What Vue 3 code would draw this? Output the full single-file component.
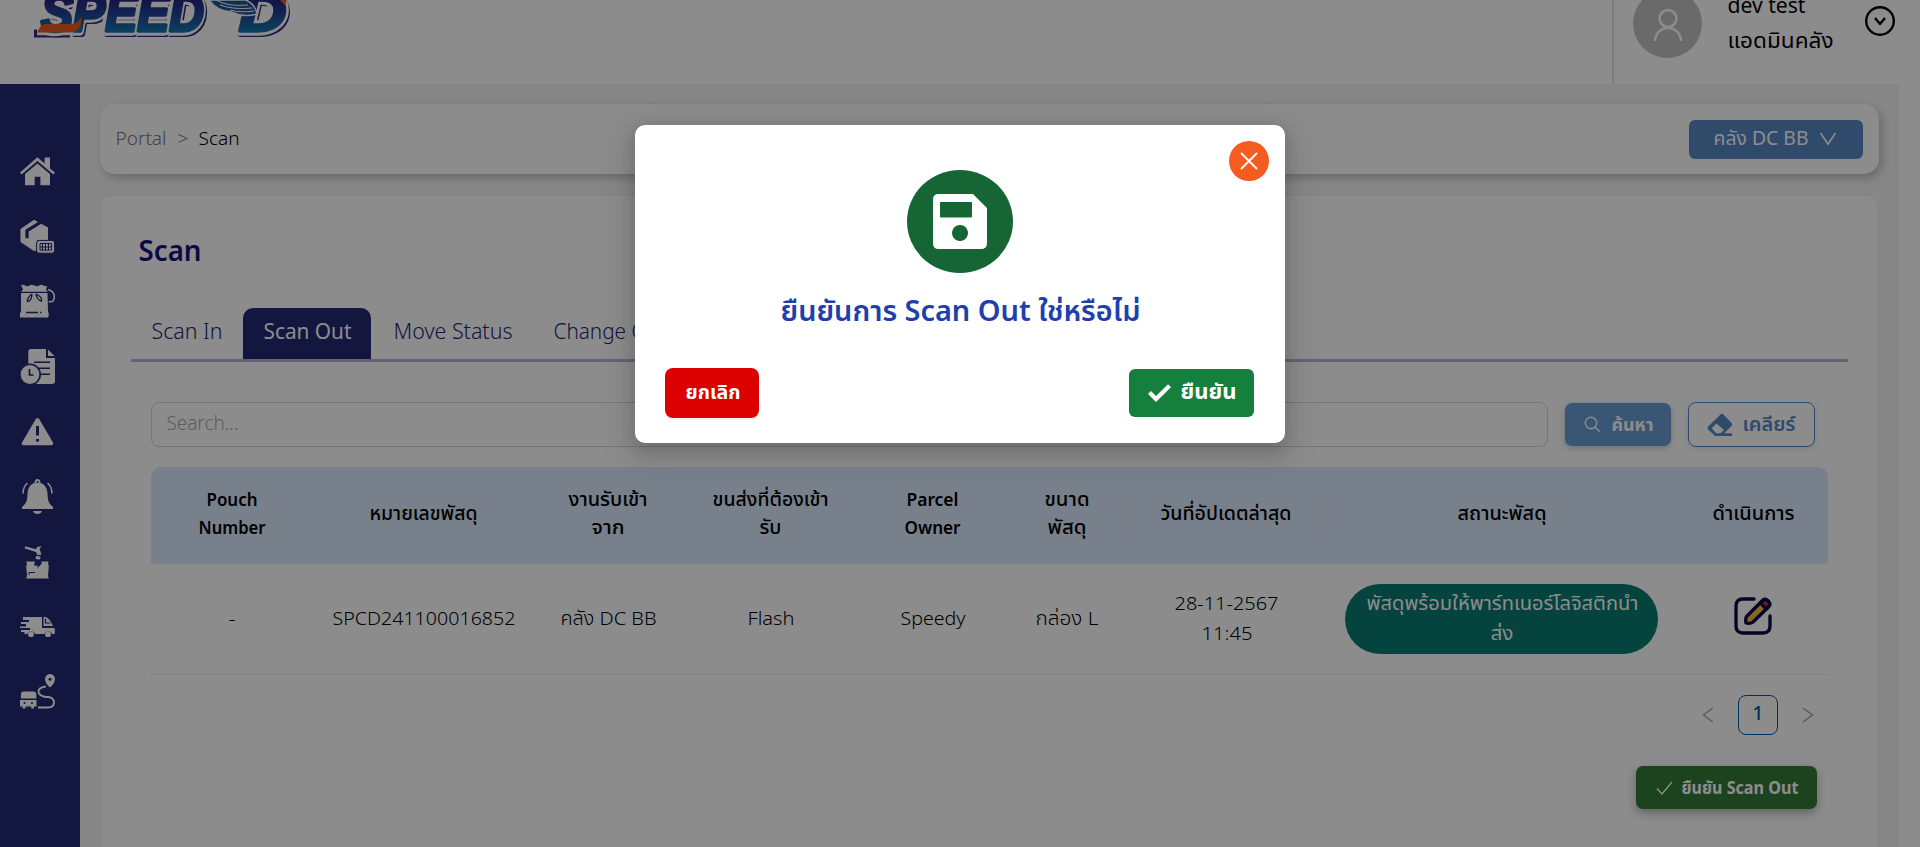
<script setup>
const vFit = {
  mounted(el, { value }) {
    const natural = el.getBoundingClientRect().width
    el.style.width = value + 'px'
    el.style.transform = `scaleX(${value / natural})`
  },
}

const columns = [
  { w: 161, lines: [['Pouch', 51], ['Number', 67]] },
  { w: 222, thai: true, lines: [['หมายเลขพัสดุ', 108]] },
  { w: 148, thai: true, lines: [['งานรับเข้า', 79], ['จาก', 33]] },
  { w: 176, thai: true, lines: [['ขนส่งที่ต้องเข้า', 116], ['รับ', 22]] },
  { w: 148, lines: [['Parcel', 52], ['Owner', 56]] },
  { w: 121, thai: true, lines: [['ขนาด', 45], ['พัสดุ', 39]] },
  { w: 198, thai: true, lines: [['วันที่อัปเดตล่าสุด', 131]] },
  { w: 353, thai: true, lines: [['สถานะพัสดุ', 89]] },
  { w: 150, thai: true, lines: [['ดำเนินการ', 82]] },
]
const cells = [
  [['-', 7]],
  [['SPCD241100016852', 183]],
  [['คลัง DC BB', 96]],
  [['Flash', 47]],
  [['Speedy', 65]],
  [['กล่อง L', 63]],
  [['28-11-2567', 104], ['11:45', 51]],
]
const tabs = [
  { t: 'Scan In', w: 71 },
  { t: 'Scan Out', w: 88, active: true },
  { t: 'Move Status', w: 119 },
  { t: 'Change Owner', w: 141 },
]
</script>

<template>
  <div class="page">
    <header class="top">
      <svg class="logo" width="270" height="44" viewBox="0 0 270 44">
        <defs>
          <linearGradient id="lg" gradientUnits="userSpaceOnUse" x1="0" y1="0" x2="0" y2="33">
            <stop offset="0" stop-color="#262580" />
            <stop offset=".5" stop-color="#1f4a98" />
            <stop offset="1" stop-color="#1478ad" />
          </linearGradient>
        </defs>
        <g font-family="Liberation Sans, sans-serif" font-weight="700" font-style="italic" font-size="54" stroke-linejoin="round">
          <g fill="#33297a" stroke="#33297a" stroke-width="8">
            <text x="10" y="33" textLength="163" lengthAdjust="spacingAndGlyphs">SPEED</text>
            <text x="208" y="33" textLength="47" lengthAdjust="spacingAndGlyphs">D</text>
            <path d="M2 33.500h36" />
          </g>
          <g fill="#fff" stroke="#fff" stroke-width="9.500">
            <text x="8" y="30.500" textLength="163" lengthAdjust="spacingAndGlyphs">SPEED</text>
            <text x="206" y="30.500" textLength="47" lengthAdjust="spacingAndGlyphs">D</text>
            <path d="M5 30.500h36" />
          </g>
          <g fill="url(#lg)" stroke="url(#lg)" stroke-width="3.500">
            <text x="9" y="30.500" textLength="163" lengthAdjust="spacingAndGlyphs">SPEED</text>
            <text x="207" y="30.500" textLength="47" lengthAdjust="spacingAndGlyphs">D</text>
          </g>
        </g>
        <path d="M5 32.500 8 27q2-3 7-3h24q7 0 10-7 2 15.500-12 15.500z" fill="#f15a24" />
        <path d="M248 0h7l-2 5z" fill="#f15a24" />
        <path d="M177 0q8 11 22 12 13 6 26 2-2-10-11-14z" fill="#20559c" stroke="#fff" stroke-width="1.500" />
        <path d="M184 0q12 7 32 5M188 5q14 5 32 3M198 10q10 3 24 1" fill="none" stroke="#fff" stroke-width="1" />
      </svg>
      <div class="user">
        <div class="avatar">
          <svg width="30" height="34" viewBox="0 0 30 34" fill="none" stroke="#fff" stroke-width="2.6">
            <circle cx="15" cy="10.5" r="8.5" /><path d="M2 33a13 13 0 0 1 26 0" />
          </svg>
        </div>
        <div class="who">
          <div><span v-fit="78" class="fit">dev test</span></div>
          <div><span v-fit="106" class="fit">แอดมินคลัง</span></div>
        </div>
        <svg class="drop" width="32" height="32" viewBox="0 0 32 32" fill="none" stroke="#000" stroke-width="2.4">
          <circle cx="16" cy="16" r="13.8" /><path d="M11 13l5 6 5-6" />
        </svg>
      </div>
    </header>

    <div class="body">
      <nav class="side">
        <svg viewBox="0 0 35 35"><path d="M0 18.6 17.4 3.3l7.2 6.3V3.4H30v11l5 4.2-1.6 2-16-13.6-15.8 13.6z" /><path d="M5 20 17.4 9.6 30 20v11.3h-9.6v-8.6h-5.7v8.6H5z" /></svg>
        <svg viewBox="0 0 35 35">
          <path d="M.5 10 14 .8 28 8.4V21H17v10.6L14 32 .5 23z" /><path d="M20.5 3.4 7 11.7v7.6" class="cut" stroke-width="3.2" />
          <rect x="16.6" y="21.4" width="18" height="12.8" rx="2.6" stroke="#242874" /><path d="M20 24.5h11.5v6.6H20zM22.5 25v6M25.5 25v6M28.5 25v6M20 28h12" class="cut" stroke-width="1" />
        </svg>
        <svg viewBox="0 0 35 35">
          <path d="M1 1.5q2-1.5 4 0 2.500 1.500 4.500 0t5 0 4.500 0 4.500 0 4 0L26 5l1.500 2.700h-26L3 5zM1 9h26.500l.5 18q1.500 4 0 6.500h-28q-.7-3 1-6.500z" />
          <path d="M12 10q-5 4-4.500 7.500 4 0 4.500-7.500M16 10q1 6 5.500 7 1-4-5.500-7M6 28.500h12M20 28.500h1.500" class="cut" stroke-width="1.300" />
          <path d="M28 5.500q7 2 6.300 8.500-1 5-5.500 3.500" fill="none" stroke="#fff" stroke-width="1.500" />
        </svg>
        <svg viewBox="0 0 35 35">
          <path d="M11 0h15v9h9v23q0 3-3 3H11q-2.700 0-2.700-3V3Q8.300 0 11 0zM28 .5l6.500 6.500H28z" />
          <path d="M14 13.300h16M18 19.300h12M20 25.300h10" class="cut" stroke-width="1.600" />
          <circle cx="10" cy="25.500" r="10.200" stroke="#242874" stroke-width="1.600" /><path d="M9.500 20v6h4" class="cut" stroke-width="1.700" />
        </svg>
        <svg viewBox="0 0 35 35"><path d="M15.800 5q1.700-2 3.400 0L33 28.500q.8 2.500-1.500 2.800h-28Q1 31 2 28.500z" /><path d="M17.500 12v9.500M17.500 25v2.600" class="cut" stroke-width="3" /></svg>
        <svg viewBox="0 0 35 35">
          <path d="M17.500 0a3 3 0 0 1 2.800 3.800Q27 6 27.500 14q0 8 2.500 11l3 3v2H2v-2l3-3q2.500-3 2.500-11Q8 6 14.700 3.800A3 3 0 0 1 17.500 0zM13 32h9q-1 3-4.500 3T13 32z" /><circle cx="17.500" cy="3" r="1" fill="#242874" />
          <path d="M7.500 4Q3 8 3 14.500M27.500 4q4.500 4 4.500 10.500" fill="none" stroke="#fff" stroke-width="1.600" />
        </svg>
        <svg viewBox="0 0 35 35">
          <path d="M5 2.200 16 5.300l1-2L21.500 2 19.500 5l2 5.500-4 .8-1.500-3.200L4.800 4.600zM16 12l4.500.5-.5 3-4.500-.5zM6 17.500h9l-1 4 4 .3-1 3 5-5.500-1-1.800h7.600l-.6 2 .8 2.500-.8 10 .8 2.500H6l1-2.500-.8-9.500.8-2.500z" />
          <path d="M9 31v-2.500h6" class="cut" stroke-width="1" />
        </svg>
        <svg viewBox="0 0 35 35">
          <path d="M3 8h19v11h12.500q.8 3 0 6H32a4 4 0 0 0-7.600 0H15a4 4 0 0 0-7.600 0H4.500v-2H1v-2h9v-2H0v-1.600h6V15H1v-2h8v-2H3z" /><path d="M23.500 8H26q4 2 7 9h-9.500z" /><path d="M25.500 9.500v4.500h5" class="cut" stroke-width="1.200" />
          <circle cx="11" cy="25.200" r="2.900" /><circle cx="28" cy="25.200" r="2.900" />
        </svg>
        <svg viewBox="0 0 35 35">
          <path d="M1 20q0-2.500 2.500-2.500H14q2.300 0 2.300 2.500v4.500H.8zM0 26h16.500v6.600H14v2h-2.700v-2H5.500v2H2.500v-2H0zM30 0q5 .5 5 5.500-.5 4-5 8-4.500-4-5-8Q25 .5 30 0z" />
          <circle cx="30" cy="5.300" r="1.500" fill="#242874" /><circle cx="4.500" cy="29" r="1" fill="#242874" /><circle cx="12" cy="29" r="1" fill="#242874" />
          <path d="M26 12.500q-7.500 1-7.500 5t7 5.500h3q5.500 1 5.500 5.500 0 5-6 5H18" fill="none" stroke="#fff" stroke-width="1.900" />
        </svg>
      </nav>

      <main class="content">
        <section class="crumbs">
          <div class="trail">
            <span v-fit="51" class="fit muted">Portal</span>
            <span v-fit="11" class="fit gt">&gt;</span>
            <span v-fit="41" class="fit">Scan</span>
          </div>
          <button class="depot">
            <span v-fit="95" class="fit">คลัง DC BB</span>
            <svg width="18" height="14" viewBox="0 0 18 14" fill="none" stroke="#fff" stroke-width="1.600"><path d="M1.500 1 9 12l7.500-11" /></svg>
          </button>
        </section>

        <section class="card">
          <h1><span v-fit="63" class="fit">Scan</span></h1>
          <div class="tabs">
            <div v-for="t in tabs" :key="t.t" class="tab" :class="{ active: t.active }"><span v-fit="t.w" class="fit">{{ t.t }}</span></div>
          </div>
          <div class="search">
            <div class="field"><span v-fit="72" class="fit">Search...</span></div>
            <button class="find">
              <svg width="17" height="17" viewBox="0 0 17 17" fill="none" stroke="#fff" stroke-width="1.400"><circle cx="7" cy="7" r="5.700" /><path d="M11 11l5 5" /></svg>
              <span v-fit="42" class="fit">ค้นหา</span>
            </button>
            <button class="clear">
              <svg width="26" height="24" viewBox="0 0 26 24"><path d="M13.500 1.500q1.500-1.500 3 0l8 8.500q1.300 1.500 0 3l-7.300 7.300H25V23H8.200L1.400 16.800q-1.800-1.800 0-3.500zM9.500 10.500 4.600 15.200l4.700 5h4.200l3.500-3.300z" fill="#5788c4" fill-rule="evenodd" /></svg>
              <span v-fit="53" class="fit">เคลียร์</span>
            </button>
          </div>

          <div class="row head">
            <div v-for="(c, i) in columns" :key="i" class="cell" :class="{ thai: c.thai }" :style="{ width: c.w + 'px' }">
              <div v-for="l in c.lines" :key="l[0]"><span v-fit="l[1]" class="fit">{{ l[0] }}</span></div>
            </div>
          </div>
          <div class="row data">
            <div v-for="(c, i) in cells" :key="i" class="cell" :style="{ width: columns[i].w + 'px' }">
              <div v-for="l in c" :key="l[0]"><span v-fit="l[1]" class="fit">{{ l[0] }}</span></div>
            </div>
            <div class="cell" :style="{ width: columns[7].w + 'px' }">
              <div class="pill">
                <div><span v-fit="272" class="fit">พัสดุพร้อมให้พาร์ทเนอร์โลจิสติกนำ</span></div>
                <div><span v-fit="23" class="fit">ส่ง</span></div>
              </div>
            </div>
            <div class="cell" :style="{ width: columns[8].w + 'px' }">
              <svg class="edit" width="38" height="38" viewBox="0 0 38 38" fill="none" stroke="#080840" stroke-width="3.300" stroke-linecap="round" stroke-linejoin="round">
                <path d="M20 2H9Q2 2 2 9v20q0 7 7 7h20q7 0 7-7V19" />
                <path d="M13 19 28 4q2.500-3 5.500-.5l1 1q2.500 3 0 5.500L19 25q-2.500 2-7 1-1-5 1-7z" fill="#f5bb45" />
                <path d="M26.500 6 28.500 3.800q2.500-2.500 5-.3l1 1q2.300 2.500 0 5L32 12z" fill="#cf3148" />
              </svg>
            </div>
          </div>

          <div class="pager">
            <svg width="12" height="16" viewBox="0 0 12 16"><path d="M11 1 1.500 8l9.500 7" /></svg>
            <span class="num">1</span>
            <svg width="12" height="16" viewBox="0 0 12 16"><path d="m1 1 9.500 7L1 15" /></svg>
          </div>
          <div class="foot">
            <button class="submit">
              <svg width="17" height="14" viewBox="0 0 17 14" fill="none" stroke="#fff" stroke-width="1.400"><path d="m1 7.500 5 5.500L16 1" /></svg>
              <span v-fit="117" class="fit">ยืนยัน Scan Out</span>
            </button>
          </div>
        </section>
      </main>
    </div>

    <div class="mask">
      <div class="modal">
        <button class="close"><svg width="20" height="20" viewBox="0 0 20 20"><path d="m2 2 16 16M18 2 2 18" stroke="#fff" stroke-width="1.800" /></svg></button>
        <div class="disc">
          <svg width="56" height="56" viewBox="0 0 56 56"><path d="M6.500 0h34.500L55 14v35q0 6-6 6H6.500Q1 55 1 49V5.500Q1 0 6.500 0zM9 8q-1 0-1 1v13.500q0 1 1 1h30q1 0 1-1V9q0-1-1-1zM28 31a8 8 0 1 0 .01 0z" fill="#fff" fill-rule="evenodd" /></svg>
        </div>
        <div class="ask"><span v-fit="360" class="fit">ยืนยันการ Scan Out ใช่หรือไม่</span></div>
        <div class="actions">
          <button class="no"><span v-fit="55" class="fit">ยกเลิก</span></button>
          <button class="yes">
            <svg width="23" height="18" viewBox="0 0 23 18" fill="none" stroke="#fff" stroke-width="4.200"><path d="m1.500 8.500 6.500 6.500L21.500 1.800" /></svg>
            <span v-fit="56" class="fit">ยืนยัน</span>
          </button>
        </div>
      </div>
    </div>
  </div>
</template>

<style>
html, body { overflow: hidden; }
</style>
<style scoped>
.page { position: relative; width: 1920px; height: 847px; overflow: hidden; background: #fff; color: #000; font: 300 19px/30px "Noto Sans", "Noto Sans Thai", "Open Sans", sans-serif; }
.page * { box-sizing: border-box; }
button { border: 0; padding: 0; font: inherit; color: #fff; display: flex; align-items: center; }
.fit { display: inline-block; white-space: nowrap; text-align: left; transform-origin: 0 50%; vertical-align: top; translate: 0.5px -1px; }
.top { height: 84px; display: flex; justify-content: space-between; }
.logo { margin-left: 32px; }
.user { width: 308px; border-left: 2px solid #e4e4e4; display: flex; align-items: flex-start; }
.avatar { width: 69px; height: 69px; border-radius: 50%; background: #c2c2c2; margin: -11px 0 0 19px; display: flex; align-items: center; justify-content: center; padding-top: 2px; }
.who { margin: -11px 0 0 25px; width: 137px; font-size: 21px; font-weight: 400; line-height: 35px; }
.drop { margin-top: 5px; }
.body { display: flex; height: 763px; padding-right: 21px; }
.side { width: 80px; background: #242874; padding: 70px 0 0 20px; display: flex; flex-direction: column; gap: 30px; }
.side svg { width: 35px; height: 35px; flex: none; fill: #fff; }
.side .cut { stroke: #242874; fill: none; }
.content { flex: 1; background: #f5f5f5; padding: 20px 20px 0; }
.crumbs { height: 70px; border-radius: 15px; background: #fff; box-shadow: 3px 4px 10px rgba(0,0,0,.22); display: flex; align-items: center; justify-content: space-between; padding: 0 16px 0 15px; }
.trail { display: flex; line-height: 30px; }
.muted, .gt { color: #777; }
.gt { margin: 0 10px 0 11px; }
.depot { width: 174px; height: 39px; background: #5788c4; border-radius: 6px; padding-left: 24px; gap: 11px; font-weight: 400; }
.card { margin: 21px 1px 0; height: 700px; background: #fff; border: 1px solid #f0f0f0; border-radius: 10px; padding: 35px 29px 0; }
h1 { margin: 0 0 0 7px; font-size: 28px; line-height: 40px; font-weight: 600; color: #19107f; }
.tabs { margin-top: 37px; height: 54px; border-bottom: 3px solid #b9b4d2; display: flex; font-size: 22px; line-height: 47px; color: #242874; }
.tab { padding: 0 20px; height: 51px; }
.tab + .tab { margin-left: 1px; }
.tab.active { background: #242874; color: #fff; border-radius: 10px 10px 0 0; font-weight: 400; }
.tab.active + .tab { margin-left: 2px; }
.search { margin: 40px 0 0 20px; display: flex; align-items: center; }
.field { width: 1397px; height: 45px; border: 1px solid #d5d5d5; border-radius: 8px; padding: 6px 14px; color: #aaa; font-size: 20px; }
.find { width: 106px; height: 43px; margin-left: 17px; background: #6b9dd5; border-radius: 7px; font-size: 18px; font-weight: 700; padding-left: 19px; gap: 10px; box-shadow: 0 2px 6px rgba(0,0,0,.2); }
.clear { width: 127px; height: 45px; margin-left: 17px; background: #fff; border: 1px solid #5788c4; border-radius: 8px; color: #5788c4; font-weight: 600; padding-left: 18px; gap: 9px; box-shadow: 0 2px 6px rgba(0,0,0,.1); }
.row { display: flex; width: 1677px; margin-left: 20px; align-items: center; text-align: center; }
.head { margin-top: 20px; height: 97px; background: #dbeafe; border-bottom: 1px solid #eee; border-radius: 10px 10px 0 0; font-size: 18px; font-weight: 600; line-height: 28px; }
.head .cell { display: flex; flex-direction: column; justify-content: center; height: 30px; border-right: 1px solid #e8e8ee; padding-bottom: 2px; }
.head .thai { font-size: 19px; font-weight: 500; }
.head .cell > div { flex: none; }
.head .cell:last-child { border: 0; }
.data { height: 111px; border-bottom: 1px solid #eaeaea; }
.pill { margin: 0 20px; height: 70px; border-radius: 35px; background: #087b71; color: #fff; font-weight: 400; padding-top: 5px; }
.edit { display: block; margin: -7px auto 0; }
.pager { margin-top: 20px; display: flex; align-items: center; justify-content: flex-end; gap: 24px; padding-right: 34px; }
.pager svg { fill: none; stroke: #a8a8a8; stroke-width: 1.500; }
.num { width: 40px; height: 40px; border: 1px solid #0059a8; border-radius: 8px; color: #0059a8; text-align: center; line-height: 35px; font-weight: 500; }
.foot { display: flex; justify-content: flex-end; margin-top: 31px; padding-right: 31px; }
.submit { width: 181px; height: 43px; border-radius: 7px; background: #327a37; font-size: 18px; font-weight: 700; padding-left: 20px; gap: 8px; box-shadow: 0 4px 10px rgba(0,0,0,.3); }
.mask { position: absolute; inset: 0; background: rgba(0,0,0,.45); display: flex; justify-content: center; align-items: flex-start; padding-top: 125px; }
.modal { position: relative; width: 650px; height: 318px; border-radius: 10px; background: #fff; padding: 45px 31px 0 30px; box-shadow: 0 6px 16px rgba(0,0,0,.12), 0 9px 28px 8px rgba(0,0,0,.12); }
.close { position: absolute; right: 16px; top: 16px; width: 40px; height: 40px; border-radius: 50%; background: #f65b20; justify-content: center; }
.disc { width: 106px; height: 103px; border-radius: 50%; background: #166534; margin: 0 auto; display: flex; align-items: center; justify-content: center; }
.ask { margin-top: 18px; text-align: center; color: #1e40af; font-size: 29px; line-height: 40px; font-weight: 600; }
.actions { margin-top: 37px; display: flex; justify-content: space-between; align-items: center; font-weight: 700; }
.no { width: 94px; height: 50px; border-radius: 8px; background: #dc0000; justify-content: center; box-shadow: 0 2px 0 rgba(255,38,5,.06); }
.yes { width: 125px; height: 48px; border-radius: 6px; background: #15803d; padding-left: 19px; gap: 9px; font-size: 22px; }
.yes .fit { margin-bottom: 4px; }
</style>
